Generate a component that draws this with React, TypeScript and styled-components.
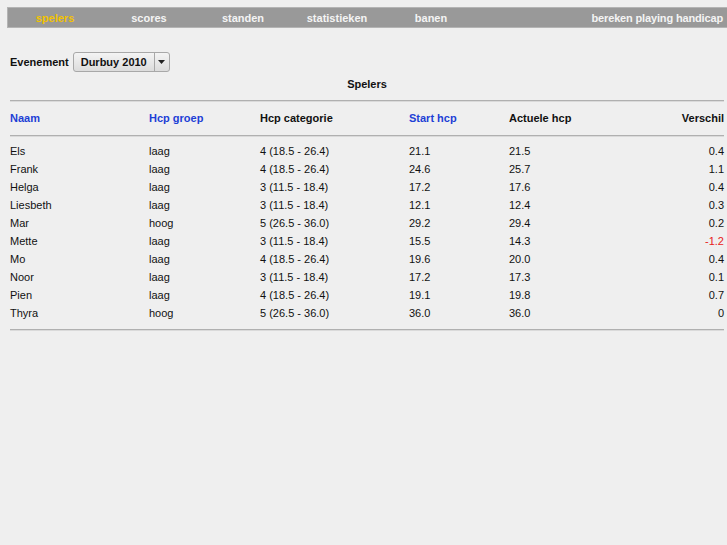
import React from 'react'
import styled, { createGlobalStyle } from 'styled-components'

const Global = createGlobalStyle`
  html, body {
    margin: 0;
    padding: 0;
    background: #efefef;
    font-family: 'Liberation Sans', Arial, sans-serif;
    font-size: 11px;
    color: #111;
  }
`

const rows = [
  ['Els', 'laag', '4 (18.5 - 26.4)', '21.1', '21.5', '0.4'],
  ['Frank', 'laag', '4 (18.5 - 26.4)', '24.6', '25.7', '1.1'],
  ['Helga', 'laag', '3 (11.5 - 18.4)', '17.2', '17.6', '0.4'],
  ['Liesbeth', 'laag', '3 (11.5 - 18.4)', '12.1', '12.4', '0.3'],
  ['Mar', 'hoog', '5 (26.5 - 36.0)', '29.2', '29.4', '0.2'],
  ['Mette', 'laag', '3 (11.5 - 18.4)', '15.5', '14.3', '-1.2'],
  ['Mo', 'laag', '4 (18.5 - 26.4)', '19.6', '20.0', '0.4'],
  ['Noor', 'laag', '3 (11.5 - 18.4)', '17.2', '17.3', '0.1'],
  ['Pien', 'laag', '4 (18.5 - 26.4)', '19.1', '19.8', '0.7'],
  ['Thyra', 'hoog', '5 (26.5 - 36.0)', '36.0', '36.0', '0'],
]

const Page = styled.div`
  padding: 7px 0 0 7px;
`

const Nav = styled.div`
  display: flex;
  height: 19px;
  background: #999;
  border: 1px solid #b4b4b4;
  border-right: none;
  align-items: center;
`

const NavItem = styled.div<{ $active?: boolean }>`
  width: 94px;
  text-align: center;
  font-weight: bold;
  color: ${p => (p.$active ? '#f2c200' : '#f4f4f4')};
`

const NavRight = styled.div`
  flex: 1;
  text-align: right;
  padding-right: 4px;
  font-weight: bold;
  color: #f4f4f4;
  letter-spacing: -0.15px;
`

const Content = styled.div`
  padding: 24px 3px 0 3px;
`

const EventRow = styled.div`
  display: flex;
  align-items: center;
  gap: 4px;
  font-weight: bold;
`

const Select = styled.div`
  display: flex;
  height: 18px;
  border: 1px solid #a8a8a8;
  border-radius: 3px;
  background: linear-gradient(#f4f4f4, #dcdcdc);
  font-weight: bold;
`

const SelectText = styled.div`
  padding: 0 7px 0 7px;
  display: flex;
  align-items: center;
`

const SelectArrow = styled.div`
  width: 14px;
  border-left: 1px solid #a8a8a8;
  display: flex;
  align-items: center;
  justify-content: center;
`

const Title = styled.div`
  text-align: center;
  font-weight: bold;
  margin-top: 6px;
  margin-bottom: 10px;
`

const Rule = styled.div`
  height: 0;
  border-top: 1px solid #b0b0b0;
  border-bottom: 1px solid #dadada;
`

const Grid = styled.div`
  display: grid;
  grid-template-columns: 139px 111px 149px 100px 1fr 80px;
`

const Head = styled.div<{ $link?: boolean; $right?: boolean }>`
  font-weight: bold;
  color: ${p => (p.$link ? '#1d3fd6' : '#111')};
  text-align: ${p => (p.$right ? 'right' : 'left')};
  height: 33px;
  line-height: 33px;
`

const Cell = styled.div<{ $right?: boolean; $neg?: boolean }>`
  height: 18px;
  line-height: 18px;
  text-align: ${p => (p.$right ? 'right' : 'left')};
  color: ${p => (p.$neg ? '#e82020' : '#111')};
`

const Body = styled(Grid)`
  padding: 5px 0 7px;
`

export default function App() {
  return (
    <Page>
      <Global />
      <Nav>
        <NavItem $active>spelers</NavItem>
        <NavItem>scores</NavItem>
        <NavItem>standen</NavItem>
        <NavItem>statistieken</NavItem>
        <NavItem>banen</NavItem>
        <NavRight>bereken playing handicap</NavRight>
      </Nav>
      <Content>
        <EventRow>
          <span>Evenement</span>
          <Select>
            <SelectText>Durbuy 2010</SelectText>
            <SelectArrow>
              <svg width="7" height="4" viewBox="0 0 7 4">
                <path d="M0 0 L7 0 L3.5 4 Z" fill="#222" />
              </svg>
            </SelectArrow>
          </Select>
        </EventRow>
        <Title>Spelers</Title>
        <Rule />
        <Grid>
          <Head $link>Naam</Head>
          <Head $link>Hcp groep</Head>
          <Head>Hcp categorie</Head>
          <Head $link>Start hcp</Head>
          <Head>Actuele hcp</Head>
          <Head $right>Verschil</Head>
        </Grid>
        <Rule />
        <Body>
          {rows.map(r => (
            <React.Fragment key={r[0]}>
              <Cell>{r[0]}</Cell>
              <Cell>{r[1]}</Cell>
              <Cell>{r[2]}</Cell>
              <Cell>{r[3]}</Cell>
              <Cell>{r[4]}</Cell>
              <Cell $right $neg={r[5].startsWith('-')}>{r[5]}</Cell>
            </React.Fragment>
          ))}
        </Body>
        <Rule />
      </Content>
    </Page>
  )
}
